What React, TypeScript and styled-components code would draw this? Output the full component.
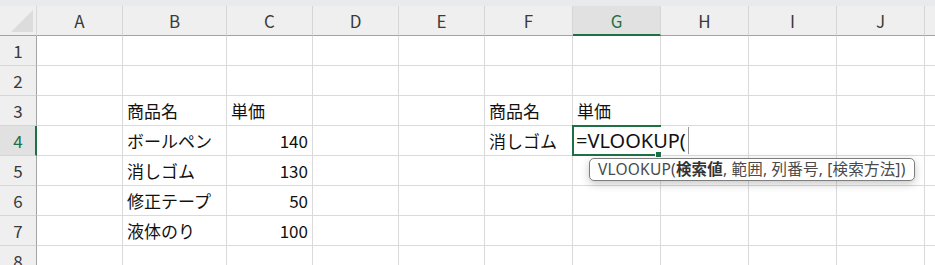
import React from 'react';
import styled, { createGlobalStyle } from 'styled-components';

const GlobalStyle = createGlobalStyle`
  html, body {
    margin: 0;
    padding: 0;
    background: #ffffff;
  }
  body {
    font-family: "Noto Sans CJK JP", "Noto Sans", sans-serif;
  }
`;

const GREEN = '#1e7145';
const GRID = '#dadada';
const HEAD_LINE = '#a3a3a3';

// K is only partly on screen, its letter sits past the right edge
const columns = [
  { label: 'A', width: 86 },
  { label: 'B', width: 104 },
  { label: 'C', width: 86 },
  { label: 'D', width: 86 },
  { label: 'E', width: 86 },
  { label: 'F', width: 88 },
  { label: 'G', width: 88 },
  { label: 'H', width: 88 },
  { label: 'I', width: 88 },
  { label: 'J', width: 88 },
  { label: '', width: 88 },
];

type CellValue = { text: string; right?: boolean };

const data: Record<number, Record<string, CellValue>> = {
  3: { B: { text: '商品名' }, C: { text: '単価' }, F: { text: '商品名' }, G: { text: '単価' } },
  4: { B: { text: 'ボールペン' }, C: { text: '140', right: true }, F: { text: '消しゴム' } },
  5: { B: { text: '消しゴム' }, C: { text: '130', right: true } },
  6: { B: { text: '修正テープ' }, C: { text: '50', right: true } },
  7: { B: { text: '液体のり' }, C: { text: '100', right: true } },
};

const activeCol = 'G';
const activeRow = 4;

const Frame = styled.div`
  position: relative;
  width: 935px;
  height: 265px;
  overflow: hidden;
  background: #ffffff;
`;

const TopStrip = styled.div`
  height: 6px;
  background: #e8ebee;
`;

const Sheet = styled.div<{ $cols: string }>`
  display: grid;
  width: max-content;
  grid-template-columns: ${({ $cols }) => $cols};
  grid-auto-rows: 30px;
`;

const Corner = styled.div`
  position: relative;
  background: #efefef;
  border-right: 1px solid #d8d8d8;
  border-bottom: 1px solid ${HEAD_LINE};
  box-sizing: border-box;
`;

const CornerTriangle = styled.svg`
  position: absolute;
  left: 11px;
  top: 4px;
`;

const ColHeader = styled.div<{ $active?: boolean }>`
  display: flex;
  align-items: center;
  justify-content: center;
  box-sizing: border-box;
  background: ${({ $active }) => ($active ? '#e1e1e1' : '#efefef')};
  border-right: 1px solid #d6d6d6;
  border-bottom: ${({ $active }) => ($active ? `2px solid ${GREEN}` : `1px solid ${HEAD_LINE}`)};
  padding-top: ${({ $active }) => ($active ? '1px' : '0')};
  color: ${({ $active }) => ($active ? GREEN : '#3a3a3a')};
  font-size: 17px;
  line-height: 1;
`;

const RowHeader = styled.div<{ $active?: boolean }>`
  display: flex;
  align-items: center;
  justify-content: center;
  box-sizing: border-box;
  background: ${({ $active }) => ($active ? '#e1e1e1' : '#efefef')};
  border-bottom: 1px solid #d6d6d6;
  border-right: ${({ $active }) => ($active ? `2px solid ${GREEN}` : `1px solid ${HEAD_LINE}`)};
  padding-left: ${({ $active }) => ($active ? '1px' : '0')};
  color: ${({ $active }) => ($active ? GREEN : '#3a3a3a')};
  font-size: 17px;
  line-height: 1;
`;

const Cell = styled.div<{ $right?: boolean }>`
  display: flex;
  align-items: center;
  justify-content: ${({ $right }) => ($right ? 'flex-end' : 'flex-start')};
  box-sizing: border-box;
  padding: 0 4px;
  border-right: 1px solid ${GRID};
  border-bottom: 1px solid ${GRID};
  color: #111111;
  font-size: 17px;
  line-height: 1;
  white-space: nowrap;
  overflow: hidden;
`;

// selection + in-cell editor float over the grid
const SelectionFrame = styled.div`
  position: absolute;
  left: 572px;
  top: 125px;
  width: 89px;
  height: 31px;
  box-sizing: border-box;
  border: 2px solid ${GREEN};
  border-right: none;
`;

const FillHandle = styled.div`
  position: absolute;
  left: 656px;
  top: 152px;
  width: 5px;
  height: 5px;
  background: ${GREEN};
  box-shadow: 0 0 0 1px #ffffff;
`;

const Editor = styled.div`
  position: absolute;
  left: 574px;
  top: 127px;
  height: 27px;
  display: flex;
  align-items: center;
  padding: 0 0 0 2px;
  background: #ffffff;
  color: #111111;
  font-family: "Noto Sans", "Noto Sans CJK JP", sans-serif;
  font-size: 20px;
  line-height: 1;
`;

const Caret = styled.span`
  display: block;
  width: 1px;
  height: 27px;
  margin-left: 2px;
  background: #9a9a9a;
`;

const Tooltip = styled.div`
  position: absolute;
  left: 589px;
  top: 158px;
  height: 23px;
  box-sizing: border-box;
  display: flex;
  align-items: center;
  padding: 0 8px;
  background: #ffffff;
  border: 1px solid #7e7e7e;
  border-radius: 5px;
  box-shadow: 0 3px 8px rgba(0, 0, 0, 0.22);
  color: #4a4a4a;
  font-family: "Noto Sans", "Noto Sans CJK JP", sans-serif;
  font-size: 15.5px;
  letter-spacing: 0.2px;
  line-height: 1;
  white-space: nowrap;
`;

const ArgActive = styled.b`
  font-weight: 700;
  color: #333333;
`;

export default function App() {
  const template = `37px ${columns.map((c) => `${c.width}px`).join(' ')}`;
  const rows = [1, 2, 3, 4, 5, 6, 7, 8];

  return (
    <>
      <GlobalStyle />
      <Frame>
        <TopStrip />
        <Sheet $cols={template}>
          <Corner>
            <CornerTriangle width="22" height="22" viewBox="0 0 22 22">
              <polygon points="0,22 22,0 22,22" fill="#dcdcdc" />
            </CornerTriangle>
          </Corner>
          {columns.map((c, i) => (
            <ColHeader key={i} $active={c.label === activeCol}>
              {c.label}
            </ColHeader>
          ))}
          {rows.map((r) => (
            <React.Fragment key={r}>
              <RowHeader $active={r === activeRow}>{r}</RowHeader>
              {columns.map((c, i) => {
                const v = data[r]?.[c.label];
                return (
                  <Cell key={i} $right={v?.right}>
                    {v?.text}
                  </Cell>
                );
              })}
            </React.Fragment>
          ))}
        </Sheet>
        <Editor>
          =VLOOKUP(
          <Caret />
        </Editor>
        <SelectionFrame />
        <FillHandle />
        <Tooltip>
          VLOOKUP(<ArgActive>検索値</ArgActive>, 範囲, 列番号, [検索方法])
        </Tooltip>
      </Frame>
    </>
  );
}
